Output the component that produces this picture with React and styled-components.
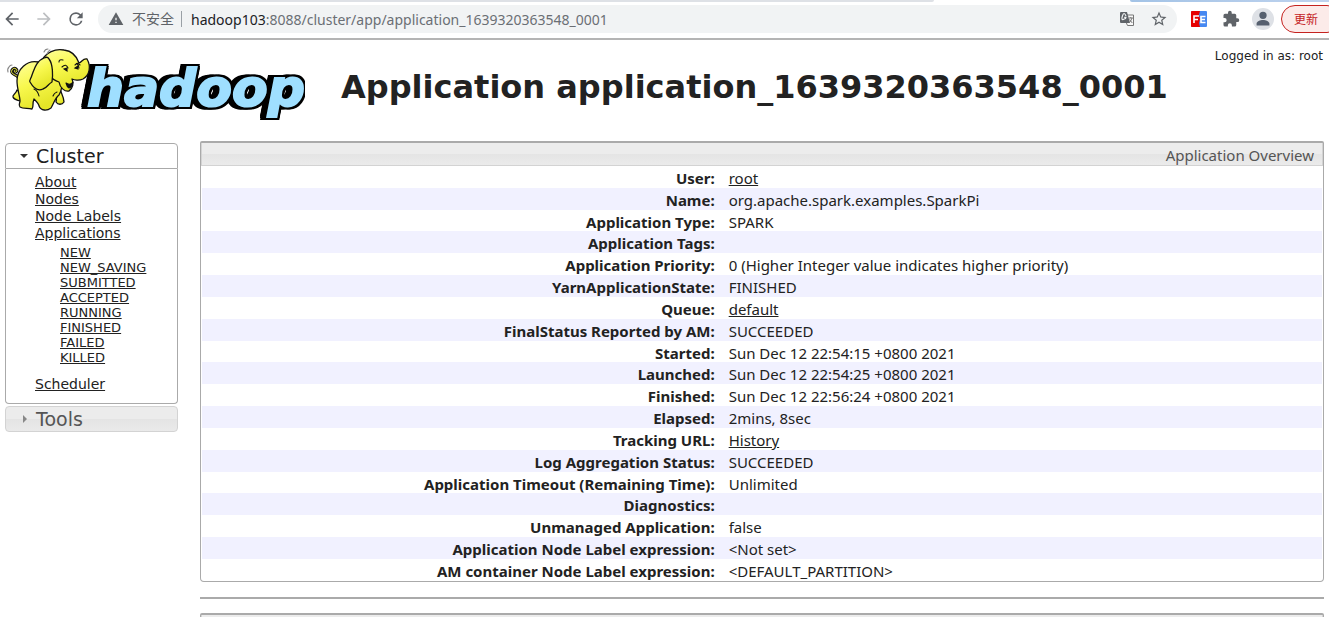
import React from "react";
import styled, { createGlobalStyle } from "styled-components";

const ui = `"Noto Sans", "Noto Sans CJK SC", sans-serif`;
const wide = `"DejaVu Sans", sans-serif`;

const GlobalStyle = createGlobalStyle`
  * { box-sizing: border-box; }
  body { margin: 0; background: #fff; color: #222; font-family: ${ui}; }
`;

const Page = styled.div`
  height: 100vh;
  overflow: hidden;
`;

const TabStrip = styled.div`
  display: flex;
  justify-content: space-between;
  height: 2px;
`;
const InactiveTabs = styled.div`
  width: 70.3%;
  background: #dee1e6;
  border-bottom-right-radius: 2px;
`;
const WindowFrame = styled.div`
  width: 15%;
  background: linear-gradient(90deg, #a3c3e6, #bfd3ee);
  border-bottom-left-radius: 2px;
`;

const Toolbar = styled.header`
  display: flex;
  align-items: center;
  height: 38px;
  padding: 0 0 2px 2px;
  border-bottom: 2px solid #b4b4b4;
  overflow: hidden;
`;
const IconButton = styled.button`
  display: flex;
  align-items: center;
  justify-content: center;
  flex: none;
  width: ${(p) => p.$w || 32}px;
  height: 28px;
  padding: 0;
  border: 0;
  background: none;
  color: ${(p) => p.$color || "#5f6368"};
`;
const AddressBar = styled.div`
  display: flex;
  align-items: center;
  flex: 1;
  height: 28px;
  margin-left: 12px;
  padding: 0 2px 0 10px;
  border-radius: 14px;
  background: #f1f3f4;
  font-size: 14px;
  color: #5f6368;
`;
const Security = styled.span`
  margin-left: 8px;
  padding-right: 7px;
  border-right: 1px solid #9aa0a6;
  line-height: 16px;
`;
const Url = styled.div`
  flex: 1;
  margin-left: 9px;
  color: #6b6f74;
  b { font-weight: 400; color: #202124; }
`;
const Actions = styled.div`
  display: flex;
  align-items: center;
  padding-left: 6px;
`;
const Avatar = styled.span`
  display: flex;
  width: 22px;
  height: 22px;
  border-radius: 50%;
  background: #dee1e6;
`;
const UpdateButton = styled.button`
  width: 60px;
  height: 28px;
  margin: 0 -12px 0 2px;
  padding: 0 0 0 12px;
  border: 1px solid #c5221f;
  border-radius: 14px;
  background: #fcebe9;
  color: #c5221f;
  font: 12px ${ui};
  text-align: left;
`;

const Banner = styled.div`
  display: flex;
  align-items: flex-start;
  height: 101px;
  padding: 6px 6px 0 5px;
`;
const Title = styled.h1`
  flex: 1;
  margin: 20px 0 0 36px;
  font: 700 32px/42px ${wide};
  white-space: nowrap;
`;
const Login = styled.div`
  width: 0;
  display: flex;
  justify-content: flex-end;
  white-space: nowrap;
  font: 12px/20px ${wide};
`;

const Columns = styled.div`
  display: flex;
  gap: 22px;
  padding: 0 5px;
`;
const Side = styled.nav`
  flex: none;
  width: 173px;
  padding-top: 2px;
  font-family: ${wide};
`;
const SideHead = styled.button`
  display: flex;
  align-items: center;
  gap: 7px;
  width: 100%;
  height: 26px;
  padding: 0 0 0 14px;
  border: 1px solid ${(p) => (p.$open ? "#aaa" : "#d3d3d3")};
  border-radius: ${(p) => (p.$open ? "4px 4px 0 0" : "4px")};
  background: ${(p) => (p.$open ? "#fff" : "linear-gradient(#ececec 50%, #e4e4e4 51%, #eaeaea)")};
  color: ${(p) => (p.$open ? "#212121" : "#555")};
  font: 19px/24px ${wide};
`;
const SideBody = styled.div`
  margin-bottom: 2px;
  padding: 5px 0 10px 29px;
  border: 1px solid #aaa;
  border-top: 0;
  border-radius: 0 0 4px 4px;
`;
const LinkList = styled.ul`
  margin: 0;
  padding: 0;
  list-style: none;
  font-size: 14px;
  line-height: 17px;
  a { color: #222; }
`;
const StateList = styled(LinkList)`
  padding: 3px 0 11px 25px;
  font-size: 13px;
  line-height: 15px;
`;

const Main = styled.main`
  flex: 1;
`;
const Panel = styled.section`
  border: 1px solid #aaa;
  border-top-width: 2px;
  border-radius: 2px 2px 4px 4px;
`;
const PanelHead = styled.div`
  height: 23px;
  padding-right: 8px;
  border: 1px solid #d3d3d3;
  border-top: 0;
  background: linear-gradient(#ececec 50%, #e4e4e4 51%, #ebebeb);
  color: #555;
  font-size: 15px;
  line-height: 24px;
  text-align: right;
`;
const Info = styled.table`
  width: 100%;
  height: 415px;
  padding: 0 1px;
  border-spacing: 0;
  font-size: 15px;
  line-height: 18px;
  th, td { padding: 2px 7px 0; height: 20px; }
  th { width: 46.4%; text-align: right; }
  td { text-align: left; }
  tr:nth-child(even) { background: #f1f1ff; }
  a { color: #222; }
`;
const Divider = styled.hr`
  height: 2px;
  margin: 15px 0 14px;
  border: 0;
  background: #aaa;
`;

const Wordmark = styled.text`
  font: italic 700 52px ${wide};
  fill: #9fdfff;
  stroke: #9fdfff;
  stroke-width: 2px;
  filter: drop-shadow(2px 0 0 #000) drop-shadow(0 2px 0 #000) drop-shadow(0 -2px 0 #000) drop-shadow(-6px 0 0 #000);
`;

const rows = [
  ["User", "root", true],
  ["Name", "org.apache.spark.examples.SparkPi"],
  ["Application Type", "SPARK"],
  ["Application Tags", ""],
  ["Application Priority", "0 (Higher Integer value indicates higher priority)"],
  ["YarnApplicationState", "FINISHED"],
  ["Queue", "default", true],
  ["FinalStatus Reported by AM", "SUCCEEDED"],
  ["Started", "Sun Dec 12 22:54:15 +0800 2021"],
  ["Launched", "Sun Dec 12 22:54:25 +0800 2021"],
  ["Finished", "Sun Dec 12 22:56:24 +0800 2021"],
  ["Elapsed", "2mins, 8sec"],
  ["Tracking URL", "History", true],
  ["Log Aggregation Status", "SUCCEEDED"],
  ["Application Timeout (Remaining Time)", "Unlimited"],
  ["Diagnostics", ""],
  ["Unmanaged Application", "false"],
  ["Application Node Label expression", "<Not set>"],
  ["AM container Node Label expression", "<DEFAULT_PARTITION>"],
];
const clusterLinks = ["About", "Nodes", "Node Labels", "Applications"];
const states = ["NEW", "NEW_SAVING", "SUBMITTED", "ACCEPTED", "RUNNING", "FINISHED", "FAILED", "KILLED"];

const Icon = ({ d, size = 20 }) => (
  <svg width={size} height={size} viewBox="0 0 24 24" fill="currentColor" aria-hidden="true">
    <path d={d} />
  </svg>
);

const Triangle = ({ open }) => (
  <svg width="9" height="8" viewBox="0 0 9 8" aria-hidden="true">
    <path d={open ? "M0 2h8L4 6z" : "M3 0v8l4-4z"} fill={open ? "#333" : "#888"} />
  </svg>
);

const TranslateIcon = () => (
  <svg width="16" height="16" viewBox="0 0 16 16" aria-hidden="true">
    <path d="M7 4h7.500v10.500H8.500L7 11" fill="#f8f8f8" stroke="#777" />
    <path d="M2 1h6l3 11H2Q1 12 1 11V2Q1 1 2 1" fill="#5f6368" />
    <path d="M7 5Q5-.0 3.400 5t1.800 3Q7 8 7 6.300H5.200" fill="none" stroke="#f1f3f4" strokeWidth="1.200" />
    <path d="M9.500 7H14M11.800 6v1M13 7q-1 3-3 5M10.500 8.500l2.800 3.500" fill="none" stroke="#777" />
  </svg>
);

const FeIcon = () => (
  <svg width="16" height="16" viewBox="0 0 16 16" aria-hidden="true">
    <rect width="16" height="16" rx="1" fill="#4688f1" />
    <path d="M1 0h8L8 4l1 4-1 4 1 4H1Q0 16 0 15V1Q0 0 1 0" fill="#e60000" />
    <path d="M3 12V5h5M3 8.500h4M14.500 5.500H10v6h4.500M10 8.500h4" fill="none" stroke="#fff" strokeWidth="1.600" />
  </svg>
);

const HadoopLogo = () => (
  <svg width="300" height="76" viewBox="5 46 300 76" role="img" aria-label="hadoop">
    <Wordmark x="87" y="106">hadoop</Wordmark>
    <defs>
      <linearGradient id="hide" x1="0" y1="0" x2=".4" y2="1">
        <stop offset="0" stopColor="#ffff9c" />
        <stop offset=".5" stopColor="#f8f84e" />
        <stop offset="1" stopColor="#e4e527" />
      </linearGradient>
    </defs>
    <g fill="url(#hide)" stroke="#111" strokeWidth="1.300" strokeLinejoin="round" strokeLinecap="round">
      <path d="M18 77C15 74 10 74 12 70c2-4 7 0 4 2-2 1-2-1-1-2" fill="none" stroke="#111" strokeWidth="3" />
      <path d="M18 77C15 74 10 74 12 70c2-4 7 0 4 2-2 1-2-1-1-2" fill="none" stroke="#eeee45" strokeWidth="1" />
      <path d="M17 90c-1 4-5 5-4 7 1 3 5 3 7 4l3-7z" />
      <path d="M57 92c-1 4 0 5-1 10 2 3 6 3 8 0 0-5-3-9-4-13z" />
      <path d="M38 62C27 60 17 69 17 81c0 8 3 15 3 20 0 2-2 4 0 6 3 2 7 1 12 2 2-3 0-5 2-10 2 2 5 5 5 7 2 5 8 5 12 2 3-5 4-10 8-13 3-5 3-10 2-13L55 66z" />
      <path d="M42 60c4-7 13-12 22-10 9 1 13 7 15 13 3-1 4-5 8-4 4 7 3 16-4 20-4 2-9 1-11 0 2 4 1 9-3 12-4 1-9-3-10-9-7-2-15-10-17-22z" />
      <path d="M44 58c-8 3-10 12-12 17-1 4-3 5-2 7 4 7 9 9 13 7 4-1 5-5 9-7 1-6 1-18-3-23-1-2-3-2-5-1z" />
    </g>
    <g fill="none" stroke="#111" strokeWidth="1.100" strokeLinecap="round">
      <path d="M66 83q4 3 7-1-1 6-4 6-2-1-3-5" fill="#111" />
      <path d="M59 62q0-3 4-2M76 64q1-2 4 1M62 67q4-4 6 1M75 65q3-3 4 3M34 89q4 2 5 7M57 92q-3 1-4 4" />
      <path d="M64 69l3-1v3zM75 68l3-2v3z" fill="#111" />
      <path d="M9 67q-2 2-1 5M12 65q-2 0-3 2M44 52q1-3 4-3M47 54q1-3 3-4" stroke="#888" />
    </g>
  </svg>
);

export default function App() {
  return (
    <Page>
      <GlobalStyle />
      <TabStrip><InactiveTabs /><WindowFrame /></TabStrip>
      <Toolbar>
        <IconButton $w={20} aria-label="Back"><Icon d="M20 11H7.830l5.590-5.590L12 4l-8 8 8 8 1.410-1.410L7.830 13H20z" /></IconButton>
        <IconButton $w={44} $color="#bcbec1" aria-label="Forward"><Icon d="M12 4l-1.410 1.410L16.170 11H4v2h12.170l-5.580 5.590L12 20l8-8z" /></IconButton>
        <IconButton $w={20} aria-label="Reload"><Icon d="M17.650 6.350A7.960 7.960 0 0 0 12 4a8 8 0 1 0 7.730 10h-2.080A6 6 0 1 1 12 6c1.660 0 3.140.690 4.220 1.780L13 11h7V4z" /></IconButton>
        <AddressBar>
          <Icon size={16} d="M1 21h22L12 2zm12-3h-2v-2h2zm0-4h-2v-4h2z" />
          <Security>不安全</Security>
          <Url><b>hadoop103</b>:8088/cluster/app/application_1639320363548_0001</Url>
          <IconButton aria-label="Translate"><TranslateIcon /></IconButton>
          <IconButton aria-label="Bookmark"><Icon size={18} d="M22 9.240l-7.190-.620L12 2 9.190 8.630 2 9.240l5.460 4.730L5.820 21 12 17.270 18.180 21l-1.630-7.030zM12 15.400l-3.760 2.270 1-4.280-3.320-2.880 4.380-.380L12 6.100l1.710 4.040 4.380.380-3.320 2.880 1 4.280z" /></IconButton>
        </AddressBar>
        <Actions>
          <IconButton aria-label="FE extension"><FeIcon /></IconButton>
          <IconButton aria-label="Extensions"><Icon size={18} d="M20.500 11H19V7a2 2 0 0 0-2-2h-4V3.500a2.500 2.500 0 0 0-5 0V5H4a2 2 0 0 0-2 2v3.800h1.500a2.700 2.700 0 0 1 0 5.400H2V20a2 2 0 0 0 2 2h3.800v-1.500a2.700 2.700 0 0 1 5.400 0V22H17a2 2 0 0 0 2-2v-4h1.500a2.500 2.500 0 0 0 0-5z" /></IconButton>
          <IconButton $color="#56606f" aria-label="Profile"><Avatar><Icon size={22} d="M12 12a4 4 0 1 0 0-8 4 4 0 0 0 0 8zm0 1c-3 0-7 1.500-7 4v2h14v-2c0-2.500-4-4-7-4z" /></Avatar></IconButton>
          <UpdateButton>更新</UpdateButton>
        </Actions>
      </Toolbar>
      <Banner>
        <HadoopLogo />
        <Title>Application application_1639320363548_0001</Title>
        <Login>Logged in as: root</Login>
      </Banner>
      <Columns>
        <Side>
          <SideHead $open><Triangle open />Cluster</SideHead>
          <SideBody>
            <LinkList>
              {clusterLinks.map((l) => <li key={l}><a href="#cluster">{l}</a></li>)}
              <li>
                <StateList>
                  {states.map((s) => <li key={s}><a href="#apps">{s}</a></li>)}
                </StateList>
              </li>
              <li><a href="#scheduler">Scheduler</a></li>
            </LinkList>
          </SideBody>
          <SideHead><Triangle />Tools</SideHead>
        </Side>
        <Main>
          <Panel>
            <PanelHead>Application Overview</PanelHead>
            <Info>
              <tbody>
                {rows.map(([k, v, link]) => (
                  <tr key={k}>
                    <th scope="row">{k}:</th>
                    <td>{link ? <a href="#detail">{v}</a> : v}</td>
                  </tr>
                ))}
              </tbody>
            </Info>
          </Panel>
          <Divider />
          <Panel><PanelHead /></Panel>
        </Main>
      </Columns>
    </Page>
  );
}
